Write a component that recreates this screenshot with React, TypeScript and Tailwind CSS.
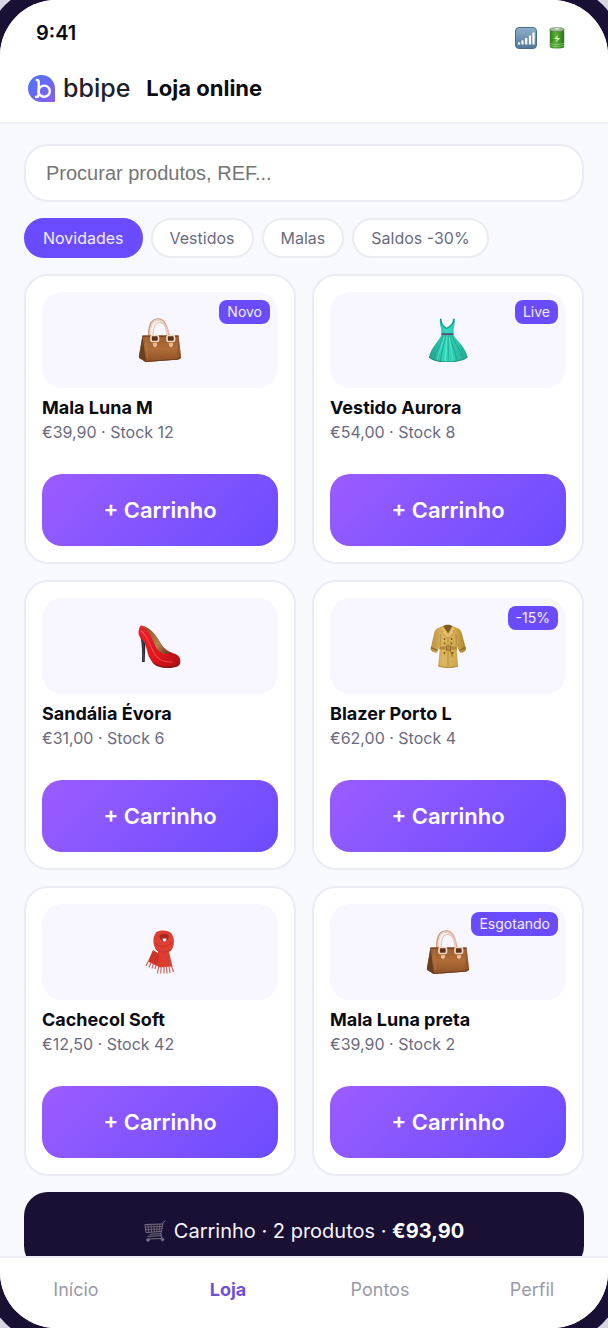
import React from "react";

type ArtName = "bag" | "dress" | "heel" | "coat" | "scarf";

type Product = {
  name: string;
  price: string;
  stock: number;
  art: ArtName;
  badge?: string;
};

const products: Product[] = [
  { name: "Mala Luna M", price: "€39,90", stock: 12, art: "bag", badge: "Novo" },
  { name: "Vestido Aurora", price: "€54,00", stock: 8, art: "dress", badge: "Live" },
  { name: "Sandália Évora", price: "€31,00", stock: 6, art: "heel" },
  { name: "Blazer Porto L", price: "€62,00", stock: 4, art: "coat", badge: "-15%" },
  { name: "Cachecol Soft", price: "€12,50", stock: 42, art: "scarf" },
  { name: "Mala Luna preta", price: "€39,90", stock: 2, art: "bag", badge: "Esgotando" },
];

const filters = ["Novidades", "Vestidos", "Malas", "Saldos -30%"];
const tabs = ["Início", "Loja", "Pontos", "Perfil"];

function Defs() {
  return (
    <svg className="absolute size-0" aria-hidden="true">
      <defs>
        <linearGradient id="leather" x1="0" y1="0" x2="0" y2="1">
          <stop offset="0" stopColor="#9c5d2e" />
          <stop offset="0.5" stopColor="#b06c38" />
          <stop offset="1" stopColor="#8f5226" />
        </linearGradient>
        <linearGradient id="teal" x1="0" y1="0" x2="1" y2="0">
          <stop offset="0" stopColor="#1f9f8b" />
          <stop offset="0.45" stopColor="#35dcc0" />
          <stop offset="1" stopColor="#1fa892" />
        </linearGradient>
        <linearGradient id="lacquer" x1="0" y1="0" x2="1" y2="1">
          <stop offset="0" stopColor="#e8242b" />
          <stop offset="0.6" stopColor="#e0141c" />
          <stop offset="1" stopColor="#a80d12" />
        </linearGradient>
        <linearGradient id="insole" x1="0" y1="0" x2="1" y2="1">
          <stop offset="0" stopColor="#7e4f2a" />
          <stop offset="0.6" stopColor="#b5824c" />
          <stop offset="1" stopColor="#5f2f1c" />
        </linearGradient>
        <linearGradient id="khaki" x1="0" y1="0" x2="1" y2="0">
          <stop offset="0" stopColor="#b98f38" />
          <stop offset="0.35" stopColor="#dcb75f" />
          <stop offset="0.7" stopColor="#d2aa50" />
          <stop offset="1" stopColor="#a97f2e" />
        </linearGradient>
        <linearGradient id="signal" x1="0" y1="0" x2="0" y2="1">
          <stop offset="0" stopColor="#8fb0c9" />
          <stop offset="1" stopColor="#54779a" />
        </linearGradient>
        <linearGradient id="cell" x1="0" y1="0" x2="1" y2="0">
          <stop offset="0" stopColor="#2f7a1c" />
          <stop offset="0.4" stopColor="#5cb238" />
          <stop offset="1" stopColor="#2c7319" />
        </linearGradient>
        <linearGradient id="brand" x1="0" y1="0" x2="1" y2="1">
          <stop offset="0" stopColor="#4a74fb" />
          <stop offset="1" stopColor="#8a5cf0" />
        </linearGradient>
      </defs>
    </svg>
  );
}

function Bag() {
  return (
    <g>
      <path d="M11.500 21C10.500 9 13 1.500 20 1.500S29.500 9 30.500 21" fill="none" stroke="#c99a84" strokeWidth="2.600" />
      <path d="M12 21C11.500 9 14 2 20 2S29 9 30 21" fill="none" stroke="#f3d5c3" strokeWidth="1.500" />
      <path d="M15 19C15 10 17 4.500 21 4.500c6 0 9.500 7 11 15" fill="none" stroke="#eac3ae" strokeWidth="1.200" />
      <path d="M4.500 17.500h36L43 38.500c0 2-1 2.800-3 3L9 44c-1.500 0-2.500-.5-3.500-1.500L.8 39z" fill="url(#leather)" />
      <path d="M4.500 17.500 8 43.800 5.500 42.500.8 39z" fill="#66401f" />
      <path d="m40.500 17.500 2.700 22-4.500 2z" fill="#8a4e25" opacity=".6" />
      <path d="M4.500 17.500h36l.2 1.500H4.700z" fill="#78431f" />
      <path d="M1 39.500 8 43.500 40 41.200l3-2" fill="none" stroke="#6c3d1a" strokeWidth="1" />
      <path d="M8 18.500 9.500 40" stroke="#bf8351" strokeWidth=".5" />
      {[13, 29].map((x) => (
        <g key={x}>
          <rect x={x} y="17.500" width="7.500" height="6" rx="1.500" fill="#5e3219" stroke="#f0d8c5" strokeWidth="1.700" />
          <path d={x === 13 ? "M15 25h4v2.500l-2 2-2-2z" : "M31 25h4v2.500l-2 2-2-2z"} fill="#e9b795" />
        </g>
      ))}
    </g>
  );
}

function Dress() {
  return (
    <g>
      <path d="M15.500.5C16 5 17 7 20.500 9.500 25 7 26.500 5 27 .5l1.800.3c.2 4.200-.6 8-1.200 10L27.500 17c4 6.500 12.500 13 14 22-3 3-7 3-10 4-5 1.500-14 1.500-19 .2-4-.8-7-1.200-9.500-4.200C5.500 29 12 24 15.500 17L15 10.500C14 7 13.500 4 14 .8z" fill="url(#teal)" />
      <path d="M14.500 1C15 5 16 8 20.500 10.500 26 8 27.500 5 28 1" fill="none" stroke="#187f70" strokeWidth="1" />
      <path d="M15.500 15.200h12v2h-12z" fill="#53536e" />
      <path d="M17 18C15 27 9 34 7.500 41M19.500 18C18 28 15 36 14.500 43M22 18c0 9 .5 17 0 25.500M24 18c1.500 9 6 18 7 24M26 18c3 8 9 15 11 22" fill="none" stroke="#1fa08c" strokeWidth=".9" />
      <path d="M18.300 19c-1.500 8-6 16-7 22.500M21 19c-.5 9-2 17-2 24M23.500 19c1 9 3 17 3.500 23.500" fill="none" stroke="#63efd6" strokeWidth=".7" />
      <path d="M3 39c3 3 6 3 9.500 4.200 5 1.300 14 1.300 19-.2 3-1 7-1 10-4" fill="none" stroke="#168473" strokeWidth=".9" />
    </g>
  );
}

function Heel() {
  return (
    <g>
      <path d="M2.500 13h5.500c-.8 8-1 16-1.300 25H4c.3-9 .2-17-1.500-25z" fill="#26252b" />
      <path d="M4.800 16 5.500 37" stroke="#5c5b63" strokeWidth=".7" />
      <path d="M4 1.500C9 4 18 11 23 20c3 5 8 8 13 9.500 4 1.500 6.500 4 6.300 7.500-.3 4.500-5 6.300-12 6.300-10 0-14.500-2.800-18.500-9C8.500 28 9 21 5 16.500 1 13 0 10 .8 6 1.500 3 2.500 1 4 1.500z" fill="url(#lacquer)" />
      <path d="M4.500 1.500C11 3.500 18.500 10 23 20c3 5 6 7.800 10.500 9-5 2-11 1-14.500-4C15.500 19.500 13 8 4.500 1.500z" fill="url(#insole)" />
      <path d="M3 7c7 5 9 15 13.500 23 4 6 10.500 8.500 18 8" fill="none" stroke="#ff6a66" strokeWidth="1.100" opacity=".6" />
      <path d="M12.500 35C17 42 28 44 37 41.500c3-.8 5-2.500 5.300-4.500.5 5-4 7-12 7-10 0-15-2.500-17.800-9z" fill="#8a1412" />
    </g>
  );
}

function Coat() {
  return (
    <g>
      <path d="M17 2.500C10 4 8.500 6 7.800 11L4.500 25c0 1.800 4.500 4.500 6.500 3.500l3-7-1.800 20.500C18 44 27 44 32 42l-1.500-20.500 3.500 7c2 1 6-1.500 6-3.500L36 10c-1-4-2.500-6-9.500-7.500z" fill="url(#khaki)" />
      <path d="M17 2.500C18.500.3 25 .3 26.500 2.500L22.500 10z" fill="#80591d" />
      <path d="M17 2 14 6l3 1-1 2 6 5 6-5-1-2 3-1-3.500-4-4.500 8z" fill="#e3c06d" stroke="#b5893a" strokeWidth=".6" />
      <path d="M22 13v29.500M14 22l1-12M30.300 22 30 10" fill="none" stroke="#a8823a" strokeWidth=".7" />
      <path d="M13.500 22.500h17.500v3H13.300z" fill="#b3873a" />
      <path d="M20.500 22h4v4h-4zM24 25.500l2.500 7" fill="#c7983e" stroke="#8a6528" strokeWidth=".9" />
      <path d="m5 23.500 6.500 3M39.500 23.500 33.500 26.500" stroke="#8f6725" strokeWidth="1.300" />
      <g fill="#785318">
        <circle cx="18.500" cy="15" r=".9" /><circle cx="25.500" cy="15" r=".9" />
        <circle cx="18.500" cy="19.500" r=".9" /><circle cx="25.500" cy="19.500" r=".9" />
        <circle cx="18.500" cy="29" r=".9" /><circle cx="26.500" cy="29" r=".9" />
      </g>
      <path d="M12.200 42C18 44 27 44 32 42" fill="none" stroke="#98712b" strokeWidth=".8" />
    </g>
  );
}

function Scarf() {
  return (
    <g>
      <path d="m15 20 8 5-4 11-9-4.500z" fill="#ce332a" />
      <path d="M20 20h10.500l4 16.500-14.500 1z" fill="#db3d31" />
      <path d="M18 2.500C22-.5 31 0 33.500 3.500c3.500 5.500 3 12 0 16.500-3.500 4-12 4.500-15.500-.5-3.500-5-3.500-12 0-17z" fill="#dd4033" />
      <path d="M21.500 5.500c2-2 6.500-2.500 9-.5.5 4-2 6-4.500 6s-5-2.500-4.500-5.500z" fill="#a8271f" />
      <path d="M24.500 8.500h4c-.2 2-1 3-2 3s-2-1-2-3z" fill="#f8f7ff" />
      <path d="M17 13c4 4 11 5.500 17.500-1M17.500 19c4 4 12 4 16 0M20.500 25l-1 11" fill="none" stroke="#bf3028" strokeWidth=".9" />
      <path d="m10.500 31-2.500 5M13 32.500 11 37.500M15.500 33.500l-1.500 5M18 35l-1 4" stroke="#d2625b" strokeWidth="1.200" />
      <path d="m20.500 37-1 6.500M23.200 37l-.5 6.500M26 37v6.500M28.500 37l.5 6.500M31 36.500l1 6.500M33.500 36l2 6" stroke="#d2625b" strokeWidth="1.200" />
    </g>
  );
}

const art: Record<ArtName, () => React.JSX.Element> = {
  bag: Bag,
  dress: Dress,
  heel: Heel,
  coat: Coat,
  scarf: Scarf,
};

function ProductArt({ name }: { name: ArtName }) {
  const Shape = art[name];
  return (
    <svg viewBox="0 0 44 44" className="size-11" aria-hidden="true">
      <Shape />
    </svg>
  );
}

function StatusIcons() {
  return (
    <div className="flex items-center gap-3" aria-hidden="true">
      <svg viewBox="0 0 22 22" className="size-[22px]">
        <rect x=".5" y=".5" width="21" height="21" rx="3.500" fill="url(#signal)" stroke="#4c6c8b" />
        <path d="M4 17.500v-2M7.500 17.500v-4M11.200 17.500V11M15 17.500V8.500M18.500 17.500V5.500" stroke="#fff" strokeWidth="2.200" />
      </svg>
      <svg viewBox="0 0 16 22" className="h-[22px] w-4">
        <path d="M.8 2.500h14.400V20c-1.500 2-12.900 2-14.400 0z" fill="url(#cell)" />
        <ellipse cx="8" cy="2.500" rx="7.200" ry="2" fill="#a9bd9e" stroke="#4c7b3b" strokeWidth=".6" />
        <ellipse cx="8" cy="1.600" rx="2.500" ry="1" fill="#d9e1d5" />
        <path d="M9.500 7.500 5 12h3l-1.200 3.500L11.500 11H8.300z" fill="#c6f3ae" />
        <path d="M1 16.500c3 1 11 1 14 0M1 18.500c3 1 11 1 14 0" fill="none" stroke="#a4d790" strokeWidth=".6" />
      </svg>
    </div>
  );
}

function Logo() {
  return (
    <div className="flex items-center gap-2">
      <svg viewBox="0 0 27 27" className="size-[27px]" aria-hidden="true">
        <path d="M13.500 0C21 0 27 6 27 13.500V25.500c0 1-.5 1.500-1.500 1.500h-12C6 27 0 21 0 13.500S6 0 13.500 0z" fill="url(#brand)" />
        <g fill="none" stroke="#fff" strokeWidth="2.400" strokeLinecap="round">
          <path d="M8.800 5c1.400 0 1.900.6 1.900 1.900v12.300c0 1.700-.8 2.800-2.700 2.800" />
          <circle cx="16.200" cy="16.200" r="5.600" />
        </g>
      </svg>
      <span className="text-[25px] leading-8 font-medium text-[#20202c]">bbipe</span>
    </div>
  );
}

function CartIcon() {
  return (
    <svg viewBox="0 0 22 22" className="size-[22px]" aria-hidden="true">
      <g fill="none" stroke="#77707f" strokeWidth="1">
        <path d="M21.500.8 19 2.500 17 13.500 5.500 14.500M18.800 4 1 4.500 2 12.500l15-1M17 13.500l.8 5L4 19M3.500 16.500 18 15.500" />
        <path d="M1.200 7 18 6.500M1.500 9.500 17.700 9M4 4.500l.8 8M7 4.500l.6 8M10 4.500l.3 7.500M13 4.300V12M16 4.200 15 12" strokeWidth=".8" />
        <circle cx="4" cy="20" r="1.300" fill="#77707f" />
        <circle cx="18.500" cy="19.500" r="1.300" fill="#77707f" />
      </g>
    </svg>
  );
}

function ProductCard({ product }: { product: Product }) {
  return (
    <article className="rounded-3xl border-2 border-[#ebebf6] bg-white p-4">
      <div className="relative flex h-24 items-center justify-center rounded-[20px] bg-[#f8f7ff]">
        <ProductArt name={product.art} />
        {product.badge && (
          <span className="absolute top-2 right-2 rounded-lg bg-[#6b4bfe] px-2 text-sm leading-6 text-[#f1edff]">
            {product.badge}
          </span>
        )}
      </div>
      <h2 className="mt-2 text-lg leading-6 font-bold text-[#0b0b12]">{product.name}</h2>
      <p className="text-base leading-6 text-[#6b6b80]">
        {product.price} · Stock {product.stock}
      </p>
      <button
        type="button"
        className="mt-[30px] h-[72px] w-full rounded-[20px] bg-linear-135 from-[#9b5cff] to-[#6b4bff] text-[22px] font-semibold text-white"
      >
        + Carrinho
      </button>
    </article>
  );
}

export default function App() {
  return (
    <div className="h-screen overflow-hidden bg-[#d9d6e4] font-[Inter,sans-serif]">
      <Defs />
      <div className="flex h-full flex-col overflow-hidden rounded-[56px] bg-[#f8f9fe] shadow-[0_0_0_16px_#1a1033]">
        <header className="shrink-0 border-b-2 border-[#eeeef4] bg-white pb-[17px]">
          <div className="flex h-[71px] items-start justify-between pt-[19px] pr-[43px] pl-9">
            <span className="text-xl leading-7 font-semibold text-[#0b0b12]">9:41</span>
            <div className="pt-2">
              <StatusIcons />
            </div>
          </div>
          <div className="flex h-[34px] items-center gap-4 px-7">
            <Logo />
            <h1 className="text-[22px] leading-8 font-bold text-[#0b0b12]">Loja online</h1>
          </div>
        </header>

        <main className="flex min-h-0 flex-1 flex-col gap-4 overflow-hidden px-6 pt-5">
          <input
            type="search"
            aria-label="Procurar produtos"
            placeholder="Procurar produtos, REF..."
            className="h-[58px] w-full shrink-0 rounded-3xl border-2 border-[#ebebf6] bg-white px-5 font-['Liberation_Sans',sans-serif] text-xl text-[#0b0b12] outline-none placeholder:text-[#757575]"
          />
          <div className="flex shrink-0 gap-2">
            {filters.map((filter, i) => (
              <button
                key={filter}
                type="button"
                aria-pressed={i === 0}
                className={
                  i === 0
                    ? "h-10 rounded-full border-2 border-[#6b4bff] bg-[#6b4bff] px-[17px] text-base whitespace-nowrap text-[#f1edff]"
                    : "h-10 rounded-full border-2 border-[#ebebf2] bg-white px-[17px] text-base whitespace-nowrap text-[#6b6b80]"
                }
              >
                {filter}
              </button>
            ))}
          </div>
          <section aria-label="Produtos" className="grid shrink-0 grid-cols-2 gap-4">
            {products.map((product) => (
              <ProductCard key={product.name} product={product} />
            ))}
          </section>
          <button
            type="button"
            className="flex h-[78px] w-full shrink-0 items-center justify-center gap-2 rounded-3xl bg-[#1a1033] text-xl text-[#f7f5ff]"
          >
            <CartIcon />
            <span>
              Carrinho · 2 produtos · <strong className="font-bold text-white">€93,90</strong>
            </span>
          </button>
        </main>

        <nav aria-label="Principal" className="grid h-[72px] shrink-0 grid-cols-4 border-t-2 border-[#eeeef4] bg-white pt-5">
          {tabs.map((tab) => (
            <a
              key={tab}
              href="#"
              aria-current={tab === "Loja" ? "page" : undefined}
              className={
                tab === "Loja"
                  ? "text-center text-lg leading-6 font-bold text-[#6f50d8]"
                  : "text-center text-lg leading-6 text-[#9a9aa8]"
              }
            >
              {tab}
            </a>
          ))}
        </nav>
      </div>
    </div>
  );
}
